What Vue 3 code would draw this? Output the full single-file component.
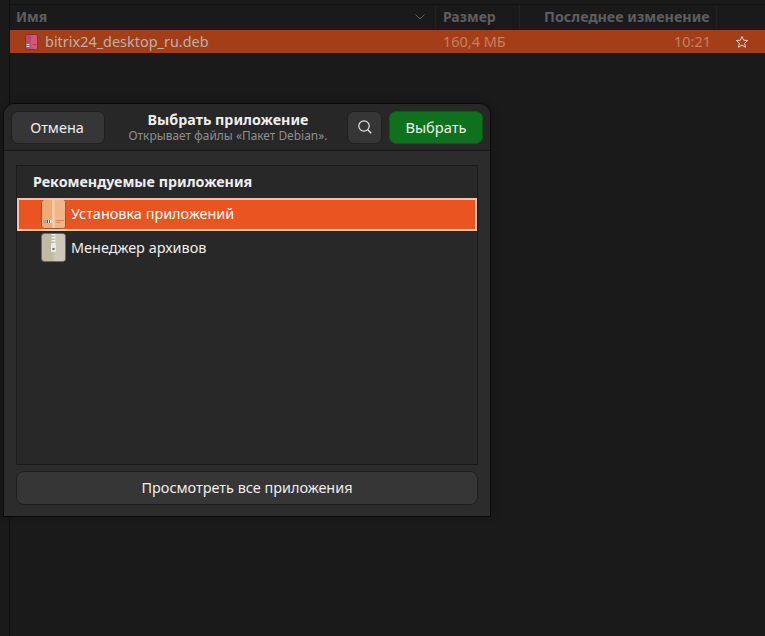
<template>
  <div class="page">
    <div class="files">
      <div class="head">
        <span class="h-name">Имя</span>
        <svg class="chev" width="12" height="8" viewBox="0 0 12 8"><path d="M1.5 1.5 6 6l4.5-4.5" fill="none" stroke="#5f5f5f" stroke-width="1"/></svg>
        <span class="h-size">Размер</span>
        <span class="h-date">Последнее изменение</span>
      </div>
      <div class="row">
        <svg class="deb" width="13" height="16" viewBox="0 0 13 16">
          <rect x=".5" y=".5" width="12" height="15" rx="1.5" fill="#c4456b" stroke="#7e3338"/>
          <rect x="6" y="1" width="6" height="14" rx="1" fill="#d0577c"/>
          <rect x="1.5" y="10" width="3" height="1" fill="#eee"/>
          <rect x="1.5" y="12" width="3" height="1" fill="#eee"/>
          <rect x="8" y="10" width="3" height="1" fill="#a83c5c"/>
        </svg>
        <span class="r-name">bitrix24_desktop_ru.deb</span>
        <span class="r-size">160,4 МБ</span>
        <span class="r-time">10:21</span>
        <svg class="star" width="14" height="14" viewBox="0 0 14 14"><path d="M7 1.3 8.6 5.2l4.2.3-3.2 2.7 1 4.1L7 10.1l-3.6 2.2 1-4.1L1.2 5.5l4.2-.3z" fill="none" stroke="#e6d5cc" stroke-width="1"/></svg>
      </div>
    </div>

    <section class="dialog">
      <header class="bar">
        <button class="btn cancel">Отмена</button>
        <div class="title">
          <div class="t1">Выбрать приложение</div>
          <div class="t2">Открывает файлы «Пакет Debian».</div>
        </div>
        <button class="btn search" aria-label="Поиск">
          <svg width="16" height="16" viewBox="0 0 16 16"><circle cx="7" cy="7" r="5.2" fill="none" stroke="#e4e4e4" stroke-width="1.2"/><path d="m11 11 3.2 3.2" stroke="#e4e4e4" stroke-width="1.4" fill="none"/></svg>
        </button>
        <button class="btn pick">Выбрать</button>
      </header>
      <div class="body">
        <div class="list">
          <div class="list-title">Рекомендуемые приложения</div>
          <div class="app selected">
            <svg width="25" height="30" viewBox="0 0 25 30">
              <rect x=".5" y=".5" width="24" height="29" rx="3" fill="#eeab78" stroke="#8c5a3a"/>
              <rect x="11" y="1" width="3" height="28" fill="#f6c9a0"/>
              <path d="M14 1h7.5a2.5 2.5 0 0 1 2.5 2.5v23a2.5 2.5 0 0 1-2.5 2.5H14z" fill="#efb68a"/>
              <rect x="1.5" y="21" width="9" height="3" fill="#f6f6f6"/>
              <path d="M3 21v3M5 21v3M6.5 21v3M8.5 21v3" stroke="#333" stroke-width=".8"/>
              <path d="M14.5 21.5h8.5M14.5 23.5h5" stroke="#d58a52" stroke-width="1"/>
            </svg>
            <span>Установка приложений</span>
          </div>
          <div class="app second">
            <svg width="25" height="29" viewBox="0 0 25 29">
              <rect x=".5" y=".5" width="24" height="28" rx="3" fill="#bfb9a6" stroke="#6e6a5e"/>
              <path d="M12.5 1h9a2.5 2.5 0 0 1 2.5 2.5v22a2.5 2.5 0 0 1-2.5 2.5h-9z" fill="#cdc8b8"/>
              <path d="M12.5 1v10" stroke="#f2f2f2" stroke-width="4" stroke-dasharray="1.6 1.4"/>
              <rect x="10" y="11" width="5" height="8" rx="1" fill="#ecebe6"/>
              <rect x="11.5" y="15" width="2" height="2" fill="#6e6a5e"/>
            </svg>
            <span>Менеджер архивов</span>
          </div>
        </div>
        <button class="btn all">Просмотреть все приложения</button>
      </div>
    </section>
  </div>
</template>

<script setup>
</script>

<style>
html, body { margin: 0; background: #1a1a1a; }
</style>

<style scoped>
.page {
  position: relative;
  width: 765px;
  height: 636px;
  overflow: hidden;
  background: #1a1a1a;
  font-family: "Noto Sans", "Open Sans", sans-serif;
  font-size: 14.45px;
}
.files {
  margin-left: 9px;
  height: 636px;
  padding-top: 4px;
  box-sizing: border-box;
  border-left: 1px solid #111;
}
.head {
  height: 25px;
  border-top: 1px solid #111;
  display: flex;
  align-items: center;
  color: #5e5e5e;
  font-weight: 700;
  font-size: 14px;
  box-sizing: border-box;
}
.head span { align-self: stretch; line-height: 24px; }
.h-name { margin-left: 6px; width: 398px; }
.chev { width: 12px; margin-right: 9px; }
.h-size { width: 84px; padding-left: 7px; border-left: 1px solid #222; box-sizing: border-box; }
.h-date {
  width: 198px;
  box-sizing: border-box;
  padding-left: 24px;
  border-left: 1px solid #222;
  border-right: 1px solid #222;
  font-size: 14.3px;
  white-space: nowrap;
}
.row {
  height: 23px;
  display: flex;
  align-items: center;
  background: #a33e18;
  color: #bdb0a8;
  margin-top: 1px;
}
.deb { margin-left: 15px; margin-right: 7px; flex: none; }
.r-name { width: 398px; line-height: 22px; }
.r-size { width: 90px; color: #c97f61; }
.r-time { width: 178px; text-align: right; color: #c97f61; }
.star { margin-left: 24px; }
.dialog {
  position: absolute;
  left: 3px;
  top: 103px;
  width: 488px;
  height: 414px;
  box-sizing: border-box;
  background: #2c2c2c;
  border: 1px solid #0a0a0a;
  border-radius: 12px 12px 0 0;
  box-shadow: 0 0 8px rgba(0, 0, 0, 0.3);
  display: flex;
  flex-direction: column;
}
.bar {
  height: 47px;
  flex: none;
  background: #272727;
  border-bottom: 1px solid #1a1a1a;
  border-radius: 11px 11px 0 0;
  box-sizing: border-box;
  display: flex;
  align-items: center;
  padding: 0 7px;
}
.btn {
  font: inherit;
  color: #eeeeee;
  background: #363636;
  border: 1px solid #1f1f1f;
  border-radius: 7px;
  height: 33px;
  box-sizing: border-box;
  padding: 0;
  display: flex;
  align-items: center;
  justify-content: center;
}
.cancel { width: 94px; padding-right: 2px; }
.title { flex: 1; text-align: center; white-space: nowrap; padding: 0 0 2px 4px; }
.t1 { font-weight: 700; color: #eee; font-size: 14.3px; line-height: 17px; }
.t2 { color: #8f8f8f; font-size: 11.9px; line-height: 14px; }
.search { width: 35px; margin-right: 7px; }
.pick { width: 94px; background: #0e711d; color: #e9f1e9; border-color: #0b5a17; font-size: 14.7px; }
.body {
  flex: 1;
  display: flex;
  flex-direction: column;
  padding: 14px 12px 11px;
  gap: 6px;
  min-height: 0;
}
.list {
  flex: 1;
  background: #282828;
  border: 1px solid #1b1b1b;
  box-sizing: border-box;
}
.list-title {
  height: 32px;
  line-height: 32px;
  padding-left: 16px;
  font-weight: 700;
  color: #eeeeee;
  font-size: 14.3px;
}
.app {
  height: 33px;
  display: flex;
  align-items: center;
  gap: 5px;
  padding-left: 23px;
  color: #eee;
  box-sizing: border-box;
}
.app svg { flex: none; margin: 0 0 2px 1px; }
.app span { padding-bottom: 2px; }
.app.selected {
  background: #e95420;
  outline: 2px solid #f5c4ae;
  outline-offset: -2px;
  color: #fff;
}
.second { margin-top: 1px; }
.all { flex: none; width: 100%; height: 34px; border-radius: 8px; padding-bottom: 2px; }
</style>
